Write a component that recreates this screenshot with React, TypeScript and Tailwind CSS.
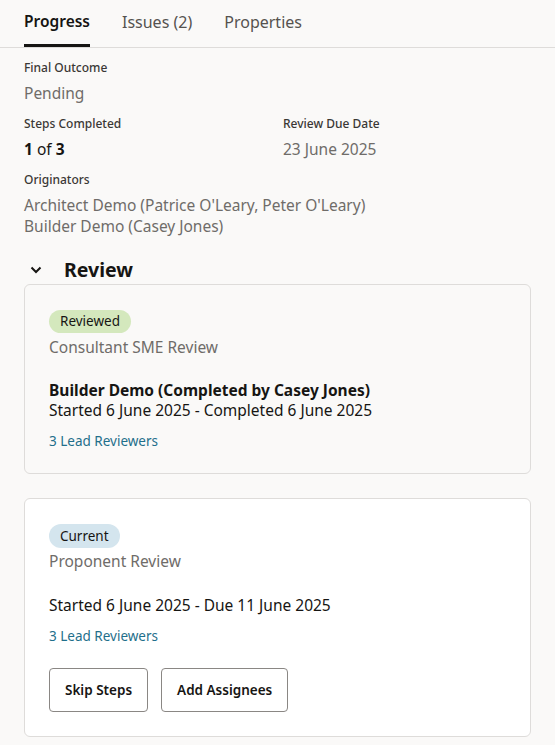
import React from 'react';

const font = { fontFamily: '"Noto Sans", "Liberation Sans", sans-serif' };

function Tabs() {
  const tabs = ['Progress', 'Issues (2)', 'Properties'];
  return (
    <div className="flex gap-[32px] px-6 border-b border-[#dedcda]">
      {tabs.map((t, i) => (
        <div
          key={t}
          className={
            i === 0
              ? 'h-[47px] flex items-center text-[15.5px] font-semibold text-[#161513] border-b-[3px] border-[#161513] pb-[1px]'
              : 'h-[47px] flex items-center text-[16px] text-[#55524f] pb-[4px]'
          }
        >
          {t}
        </div>
      ))}
    </div>
  );
}

function Field({ label, children }: { label: string; children: React.ReactNode }) {
  return (
    <div>
      <div className="text-[12px] font-medium text-[#3a3835] leading-[16px]">{label}</div>
      <div className="mt-[7px] text-[15.5px] text-[#6f6c69] leading-[21px]">{children}</div>
    </div>
  );
}

function Badge({ text, tone }: { text: string; tone: 'green' | 'blue' }) {
  return (
    <div
      className={
        tone === 'green'
          ? 'flex w-fit items-center h-[23px] px-[11px] rounded-full bg-[#d4e8bd] text-[13.5px] text-[#161513]'
          : 'flex w-fit items-center h-[24px] px-[11px] rounded-full bg-[#d4e5ee] text-[13.5px] text-[#161513]'
      }
    >
      {text}
    </div>
  );
}

export default function App() {
  return (
    <div style={font} className="w-[555px] h-[745px] bg-[#faf9f8] overflow-hidden">
      <Tabs />
      <div className="px-6 pt-[12px] flex flex-col gap-[12px]">
        <Field label="Final Outcome">Pending</Field>
        <div className="grid grid-cols-[259px_1fr]">
          <Field label="Steps Completed">
            <span className="text-[#161513] font-bold">1</span>{' '}
            <span className="text-[#161513]">of</span>{' '}
            <span className="text-[#161513] font-bold">3</span>
          </Field>
          <Field label="Review Due Date">23 June 2025</Field>
        </div>
        <Field label="Originators">
          <div>Architect Demo (Patrice O'Leary, Peter O'Leary)</div>
          <div>Builder Demo (Casey Jones)</div>
        </Field>
      </div>

      <div className="px-6 mt-[20px]">
        <div className="flex items-center h-[26px]">
          <svg width="16" height="16" viewBox="0 0 16 16" className="ml-[4px]">
            <path d="M3.5 5.5 8 10l4.5-4.5" fill="none" stroke="#161513" strokeWidth="2" />
          </svg>
          <span className="ml-[20px] text-[19.5px] font-bold text-[#161513]">Review</span>
        </div>

        <div className="mt-[1px] rounded-[6px] border border-[#dedcda] bg-[#faf9f8] px-6 pt-[25px] h-[190px]">
          <Badge text="Reviewed" tone="green" />
          <div className="mt-[3px] text-[15.5px] text-[#6f6c69] leading-[22px]">Consultant SME Review</div>
          <div className="mt-[22px] text-[15.5px] font-bold text-[#161513] leading-[20px]">
            Builder Demo (Completed by Casey Jones)
          </div>
          <div className="text-[15.5px] text-[#161513] leading-[20px]">
            Started 6 June 2025 - Completed 6 June 2025
          </div>
          <div className="mt-[11px] text-[13.5px] text-[#1f6f8b] leading-[20px]">3 Lead Reviewers</div>
        </div>

        <div className="mt-[24px] rounded-[6px] border border-[#dedcda] bg-white px-6 pt-[25px] h-[239px]">
          <Badge text="Current" tone="blue" />
          <div className="mt-[2px] text-[15.5px] text-[#6f6c69] leading-[22px]">Proponent Review</div>
          <div className="mt-[23px] text-[15.5px] text-[#161513] leading-[21px]">
            Started 6 June 2025 - Due 11 June 2025
          </div>
          <div className="mt-[10px] text-[13.5px] text-[#1f6f8b] leading-[20px]">3 Lead Reviewers</div>
          <div className="mt-[22px] flex gap-[13px]">
            <button className="h-[44px] px-[15px] rounded-[4px] border border-[#8a8784] bg-white text-[13.5px] font-semibold text-[#161513]">
              Skip Steps
            </button>
            <button className="h-[44px] px-[15px] rounded-[4px] border border-[#8a8784] bg-white text-[13.5px] font-semibold text-[#161513]">
              Add Assignees
            </button>
          </div>
        </div>
      </div>
    </div>
  );
}
